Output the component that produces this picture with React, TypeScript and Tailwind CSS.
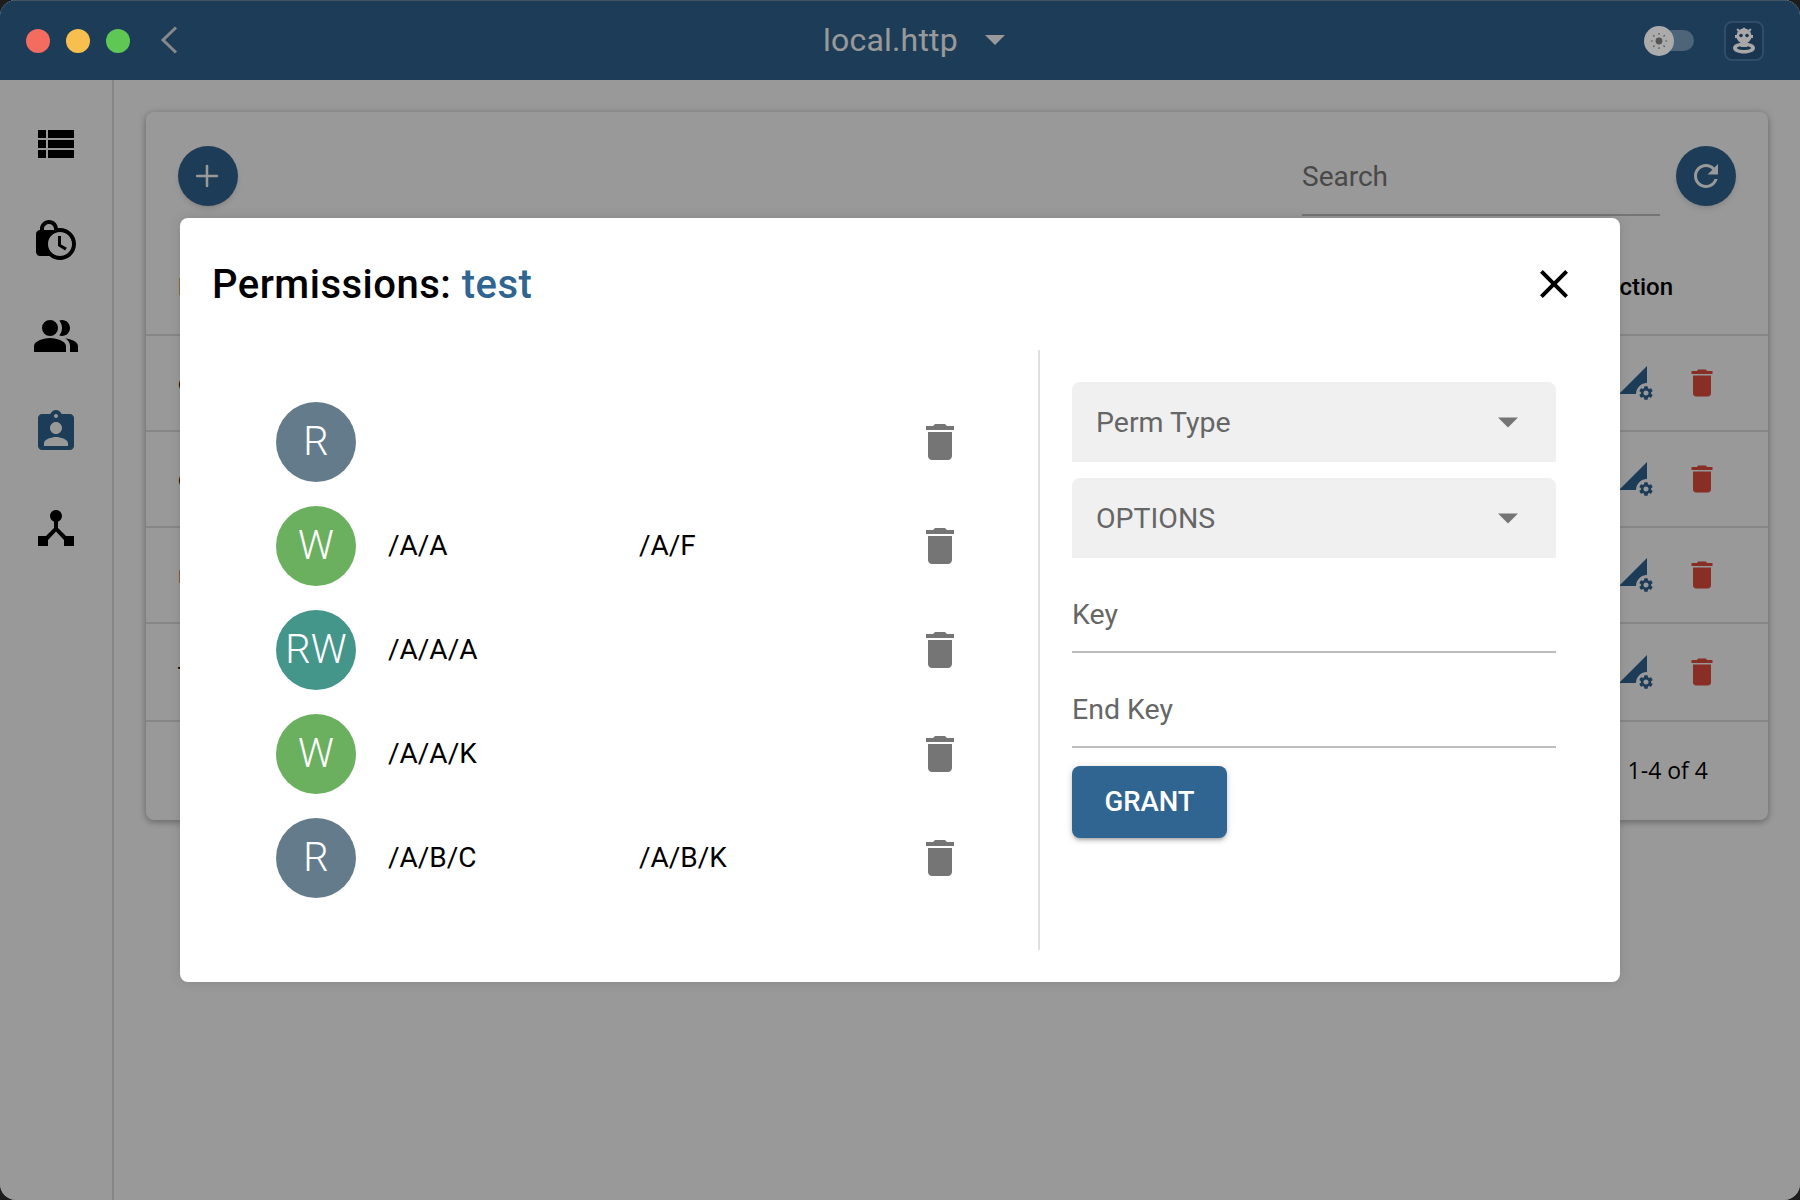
import { Plus } from 'lucide-react';

const DELETE_PATH = 'M6 19c0 1.1.9 2 2 2h8c1.1 0 2-.9 2-2V7H6v12zM19 4h-3.5l-1-1h-5l-1 1H5v2h14V4z';
const GEAR_PATH =
  'M19.14 12.94c.04-.3.06-.61.06-.94 0-.32-.02-.64-.07-.94l2.03-1.58c.18-.14.23-.41.12-.61l-1.92-3.32c-.12-.22-.37-.29-.59-.22l-2.39.96c-.5-.38-1.03-.7-1.62-.94l-.36-2.54c-.04-.24-.24-.41-.48-.41h-3.84c-.24 0-.43.17-.47.41l-.36 2.54c-.59.24-1.13.57-1.62.94l-2.39-.96c-.22-.08-.47 0-.59.22L2.74 8.87c-.12.21-.08.47.12.61l2.03 1.58c-.05.3-.09.63-.09.94s.02.64.07.94l-2.03 1.58c-.18.14-.23.41-.12.61l1.92 3.32c.12.22.37.29.59.22l2.39-.96c.5.38 1.03.7 1.62.94l.36 2.54c.05.24.24.41.48.41h3.84c.24 0 .44-.17.47-.41l.36-2.54c.59-.24 1.13-.56 1.62-.94l2.39.96c.22.08.47 0 .59-.22l1.92-3.32c.12-.22.07-.47-.12-.61l-2.01-1.58zM12 15.6c-1.98 0-3.6-1.62-3.6-3.6s1.62-3.6 3.6-3.6 3.6 1.62 3.6 3.6-1.62 3.6-3.6 3.6z';

const sideIcons = [
  {
    d: 'M3 14h4v-4H3v4zm0 5h4v-4H3v4zM3 9h4V5H3v4zm5 5h13v-4H8v4zm0 5h13v-4H8v4zM8 5v4h13V5H8z',
    color: 'text-black',
  },
  {
    d: 'M14.5 14.2l2.9 1.7-.8 1.3L13 15v-5h1.5v4.2zM22 14c0 4.41-3.59 8-8 8-2.02 0-3.86-.76-5.27-2H4c-1.15 0-2-.85-2-2V9c0-1.12.89-1.96 2-2v-.5C4 4.01 6.01 2 8.5 2c2.34 0 4.24 1.79 4.46 4.08.34-.05.69-.08 1.04-.08 4.41 0 8 3.59 8 8zM6 7h5v-.74C10.88 4.99 9.8 4 8.5 4 7.12 4 6 5.12 6 6.5V7zm14 7c0-3.31-2.69-6-6-6s-6 2.69-6 6 2.69 6 6 6 6-2.69 6-6z',
    color: 'text-black',
  },
  {
    d: 'M16.67 13.13C18.04 14.06 19 15.32 19 17v3h4v-3c0-2.18-3.57-3.47-6.33-3.87zM9 12a4 4 0 1 0 0-8 4 4 0 0 0 0 8zM15 12c2.21 0 4-1.79 4-4s-1.79-4-4-4c-.47 0-.91.1-1.33.24C14.5 5.27 15 6.58 15 8s-.5 2.73-1.33 3.76c.42.14.86.24 1.33.24zM9 13c-2.67 0-8 1.34-8 4v3h16v-3c0-2.66-5.33-4-8-4z',
    color: 'text-black',
  },
  {
    d: 'M19 3h-4.18C14.4 1.84 13.3 1 12 1c-1.3 0-2.4.84-2.82 2H5c-1.1 0-2 .9-2 2v14c0 1.1.9 2 2 2h14c1.1 0 2-.9 2-2V5c0-1.1-.9-2-2-2zm-7 0c.55 0 1 .45 1 1s-.45 1-1 1-1-.45-1-1 .45-1 1-1zm0 4c1.66 0 3 1.34 3 3s-1.34 3-3 3-3-1.34-3-3 1.34-3 3-3zm6 12H6v-1.4c0-2 4-3.1 6-3.1s6 1.1 6 3.1V19z',
    color: 'text-[#306592]',
  },
  {
    d: 'M17 16l-4-4V8.82C14.16 8.4 15 7.3 15 6c0-1.66-1.34-3-3-3S9 4.34 9 6c0 1.3.84 2.4 2 2.82V12l-4 4H3v5h5v-3.05l4-4.2 4 4.2V21h5v-5h-4z',
    color: 'text-black',
  },
];

const tableRows = ['client', 'cert', 'root', 'test'];

const permissions = [
  { type: 'R', color: 'bg-[#637b8a]', key: '', end: '' },
  { type: 'W', color: 'bg-[#6ab05f]', key: '/A/A', end: '/A/F' },
  { type: 'RW', color: 'bg-[#44958a]', key: '/A/A/A', end: '' },
  { type: 'W', color: 'bg-[#6ab05f]', key: '/A/A/K', end: '' },
  { type: 'R', color: 'bg-[#637b8a]', key: '/A/B/C', end: '/A/B/K' },
];

function Caret({ className }: { className: string }) {
  return (
    <svg viewBox="0 0 20 10" className={className} fill="currentColor">
      <path d="M0 0h20L10 10z" />
    </svg>
  );
}

function TrashIcon({ className }: { className: string }) {
  return (
    <svg viewBox="0 0 24 24" className={className} fill="currentColor">
      <path d={DELETE_PATH} />
    </svg>
  );
}

function RoleIcon() {
  return (
    <svg viewBox="0 0 38 36" className="w-[38px] h-9 text-[#306592]" fill="currentColor">
      <path d="M29 1V18A11 11 0 0 0 18 29H1Z" />
      <svg x="19.5" y="19.5" width="17" height="17" viewBox="0 0 24 24">
        <path d={GEAR_PATH} />
      </svg>
    </svg>
  );
}

function SelectBox({ label }: { label: string }) {
  return (
    <div className="h-20 flex items-center pl-6 pr-[38px] bg-[#f0f0f0] rounded-t-lg text-[28.5px] text-[#666]">
      <span className="pt-[2px]">{label}</span>
      <Caret className="ml-auto w-5 h-[11px] text-[#757575]" />
    </div>
  );
}

function TextField({ label }: { label: string }) {
  return (
    <div className="h-[79px] pt-[5px] flex items-center border-b-2 border-[#bdbdbd] text-[28.5px] text-[#666]">
      {label}
    </div>
  );
}

export default function App() {
  return (
    <div className="w-[1800px] h-[1200px] bg-[#1d1d1d] font-[Roboto,sans-serif]">
      <div className="relative w-full h-full overflow-hidden rounded-2xl bg-white flex flex-col">
        <header className="h-20 shrink-0 flex items-center border-t border-[#6d8aa5] bg-[#306592] text-white">
          <div className="relative z-20 flex items-center gap-4 pl-[26px]">
            <span className="w-6 h-6 rounded-full bg-[#f46b5f]" />
            <span className="w-6 h-6 rounded-full bg-[#f7c04e]" />
            <span className="w-6 h-6 rounded-full bg-[#5fc854]" />
          </div>
          <svg viewBox="0 0 18 28" className="ml-[30px] mb-[2px] w-[18px] h-7 text-[#e4e4e4]" fill="none" stroke="currentColor" strokeWidth="3">
            <path d="M16 1.5L3 14l13 12.5" />
          </svg>
          <span className="ml-[645px] pb-[2px] text-[32px] tracking-[0.2px] leading-none">local.http</span>
          <Caret className="ml-[27px] mb-[2px] w-5 h-2.5" />
          <div className="relative z-20 ml-auto flex items-center mr-9">
            <div className="relative w-[37px] h-[21px] rounded-full bg-[#4d6479]">
              <span className="absolute left-[-13px] top-[-4px] w-[30px] h-[30px] rounded-full bg-[#ababab] flex items-center justify-center">
                <svg viewBox="0 0 20 20" className="w-[18px] h-[18px] text-[#555]" fill="currentColor" stroke="currentColor">
                  <circle cx="10" cy="10" r="3.8" stroke="none" />
                  <path strokeWidth="1.3" d="M10 1v2M10 17v2M1 10h2M17 10h2M3.6 3.6 5 5M15 15l1.4 1.4M3.6 16.4 5 15M15 5l1.4-1.4" />
                </svg>
              </span>
            </div>
            <div className="ml-[30px] w-[40px] h-[40px] flex items-center justify-center rounded-lg border-2 border-[#2f4d68] bg-[#1a3550]">
              <svg viewBox="0 0 24 27" className="w-6 h-[27px] text-[#a8a8a8]" fill="currentColor">
                <circle cx="12" cy="9" r="7.6" />
                <path d="M12 0.500a1.500 1.500 0 0 1 1.500 1.500h-3a1.500 1.500 0 0 1 1.500-1.500zM5.500 1.500l2.500 1.500-2 2-1.500-2.500zM18.500 1.500l-2.500 1.500 2 2 1.500-2.500zM3 8h2v3H3zM19 8h2v3h-2z" />
                <rect x="8.500" y="15" width="7" height="5" />
                <path fillRule="evenodd" d="M12 15.500c6.100 0 11 2.300 11 5.500s-4.900 5.500-11 5.500S1 24.200 1 21s4.900-5.500 11-5.500zm0 3.500c-3.900 0-7 .9-7 2s3.100 2 7 2 7-.9 7-2-3.100-2-7-2z" />
                <rect x="9" y="15" width="6" height="5" />
                <circle cx="9" cy="8.500" r="1.800" fill="#1a3550" />
                <circle cx="15" cy="8.500" r="1.800" fill="#1a3550" />
              </svg>
            </div>
          </div>
        </header>

        <div className="flex-1 flex min-h-0">
          <aside className="w-[114px] shrink-0 border-r-2 border-[#e0e0e0] pt-4">
            {sideIcons.map((icon) => (
              <div key={icon.d} className="h-24 flex items-center justify-center">
                <svg viewBox="0 0 24 24" className={`w-12 h-12 ${icon.color}`} fill="currentColor">
                  <path d={icon.d} />
                </svg>
              </div>
            ))}
          </aside>

          <main className="flex-1 px-8 pt-8">
            <section className="h-[708px] rounded-lg bg-white shadow-[0_2px_6px_rgba(0,0,0,0.25),0_1px_10px_rgba(0,0,0,0.12)]">
              <div className="h-[127px] flex items-start pt-[34px] pl-8 pr-8">
                <button className="w-[60px] h-[60px] pr-[2px] rounded-full bg-[#306592] text-white flex items-center justify-center shadow-md">
                  <Plus size={34} strokeWidth={1.8} />
                </button>
                <div className="ml-auto w-[358px] h-[70px] pb-[6px] flex items-center border-b-2 border-[#c4c4c4] text-[28px] text-[#7a7a7a]">
                  Search
                </div>
                <button className="ml-4 w-[60px] h-[60px] rounded-full bg-[#306592] text-white flex items-center justify-center shadow-md">
                  <svg viewBox="0 0 24 24" className="w-9 h-9" fill="currentColor">
                    <path d="M17.65 6.35C16.2 4.9 14.21 4 12 4c-4.42 0-7.99 3.58-7.99 8s3.57 8 7.99 8c3.730 0 6.840-2.550 7.730-6h-2.080c-.820 2.330-3.040 4-5.650 4-3.310 0-6-2.690-6-6s2.690-6 6-6c1.660 0 3.140.690 4.220 1.780L13 11h7V4l-2.350 2.350z" />
                  </svg>
                </button>
              </div>
              <div className="h-[97px] flex items-center justify-between pl-8 pr-[95px] border-b-2 border-[#e0e0e0] text-[24px] font-medium text-black">
                <span>Name</span>
                <span>Action</span>
              </div>
              {tableRows.map((name) => (
                <div
                  key={name}
                  className={`${name === 'test' ? 'h-[98px]' : 'h-24'} flex items-center pl-8 pr-12 border-b-2 border-[#e0e0e0] text-[24px] text-black`}
                >
                  <span>{name}</span>
                  <div className="ml-auto flex items-center gap-7">
                    <RoleIcon />
                    <TrashIcon className="w-9 h-9 text-[#e54d3f]" />
                  </div>
                </div>
              ))}
              <div className="h-[98px] pb-[2px] flex items-center justify-end pr-[60px] text-[23px] text-black font-['Open_Sans',sans-serif]">
                1-4 of 4
              </div>
            </section>
          </main>
        </div>

        <div className="absolute inset-0 z-10 bg-black/40">
          <div className="ml-[180px] mt-[218px] w-[1440px] h-[764px] rounded-lg bg-white flex flex-col shadow-[0_0_12px_rgba(0,0,0,0.12)]">
            <div className="h-[132px] shrink-0 flex items-center pl-8 pr-[42px]">
              <h2 className="pt-[2px] text-[40px] tracking-[0.5px] font-medium text-black">
                Permissions: <span className="text-[#306592]">test</span>
              </h2>
              <svg viewBox="0 0 24 24" className="ml-auto w-12 h-12 text-black" fill="currentColor">
                <path d="M19 6.410L17.590 5 12 10.590 6.410 5 5 6.410 10.590 12 5 17.590 6.410 19 12 13.410 17.590 19 19 17.590 13.410 12z" />
              </svg>
            </div>
            <div className="flex-1 flex pl-8 pb-8 pr-16">
              <ul className="w-[826px] shrink-0 pl-16 pr-[74px] pt-[52px] flex flex-col gap-6">
                {permissions.map((perm) => (
                  <li key={`${perm.type}${perm.key}`} className="h-20 flex items-center text-[28px] text-black">
                    <span className={`w-20 h-20 rounded-full flex items-center justify-center text-white text-[40px] font-light ${perm.color}`}>
                      {perm.type}
                    </span>
                    <span className="ml-8 w-[251px]">{perm.key}</span>
                    <span>{perm.end}</span>
                    <TrashIcon className="ml-auto w-12 h-12 text-[#757575]" />
                  </li>
                ))}
              </ul>
              <div className="flex-1 border-l-2 border-[#e0e0e0] pl-8 pt-8 flex flex-col">
                <div className="flex flex-col gap-4">
                  <SelectBox label="Perm Type" />
                  <SelectBox label="OPTIONS" />
                  <TextField label="Key" />
                  <TextField label="End Key" />
                </div>
                <button className="mt-[18px] w-[155px] h-[72px] rounded-lg bg-[#306592] text-white text-[27.5px] font-medium shadow-[0_3px_3px_-2px_rgba(0,0,0,0.2),0_3px_4px_rgba(0,0,0,0.14),0_1px_8px_rgba(0,0,0,0.12)]">
                  GRANT
                </button>
              </div>
            </div>
          </div>
        </div>
      </div>
    </div>
  );
}
